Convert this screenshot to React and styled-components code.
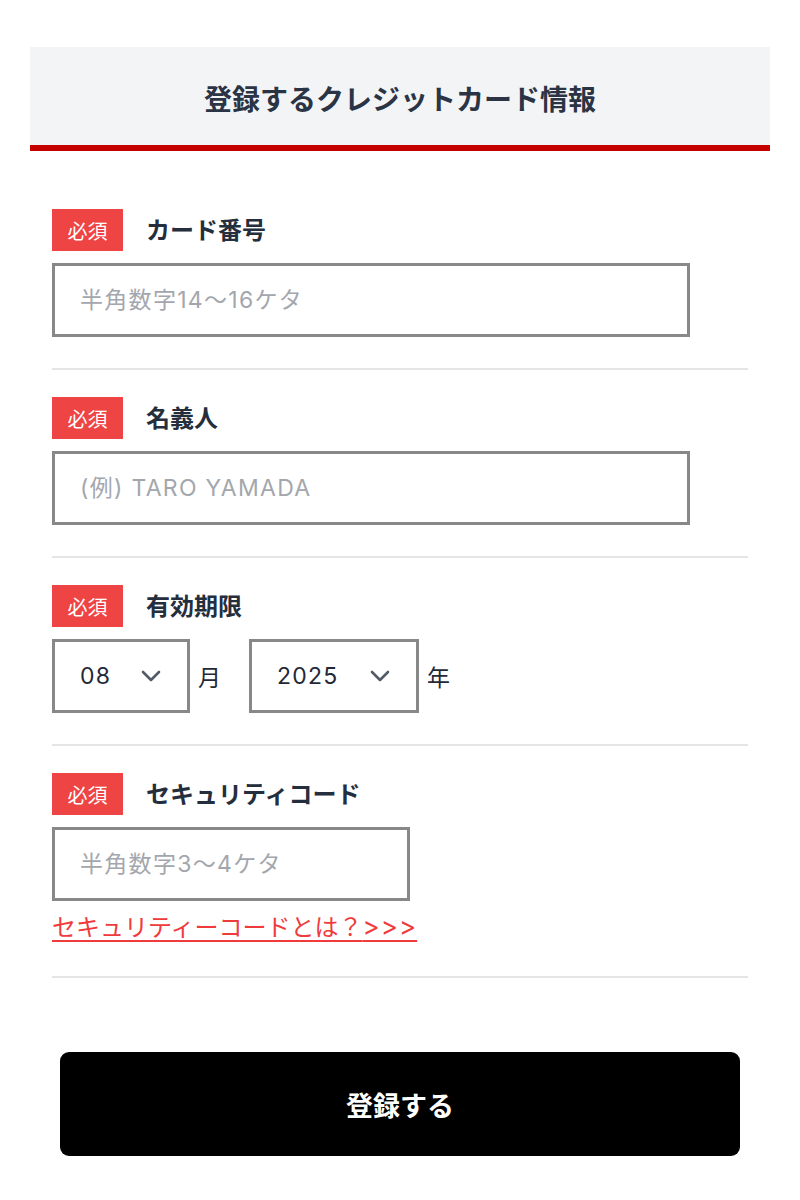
import React from "react";
import styled, { createGlobalStyle } from "styled-components";

const GlobalStyle = createGlobalStyle`
  html, body { margin: 0; padding: 0; background: #ffffff; }
  body {
    font-family: Inter, "Noto Sans CJK JP", "Noto Sans", sans-serif;
    color: #1f2937;
  }
  * { box-sizing: border-box; }
`;

const Page = styled.div`
  width: 800px;
  padding: 47px 30px 44px;
`;

const Header = styled.header`
  height: 104px;
  background: #f3f4f6;
  border-bottom: 6px solid #c40000;
  display: flex;
  align-items: center;
  justify-content: center;
  padding-top: 4px;
`;

const Title = styled.h1`
  margin: 0;
  font-size: 28px;
  font-weight: 700;
  color: #2b3444;
  letter-spacing: 0;
`;

const Form = styled.form`
  padding: 31px 22px 0;
`;

const Section = styled.section`
  padding: 27px 0 ${(p) => p.$bottom || 31}px;
  border-bottom: 2px solid #e5e5e5;
`;

const LabelRow = styled.div`
  display: flex;
  align-items: center;
  margin-bottom: 12px;
`;

const Badge = styled.span`
  width: 71px;
  height: 42px;
  background: #ef4444;
  color: #ffffff;
  font-size: 20px;
  display: flex;
  align-items: center;
  justify-content: center;
`;

const Label = styled.label`
  margin-left: 23px;
  margin-top: -3px;
  font-size: 24px;
  font-weight: 700;
  color: #252e3d;
`;

const TextInput = styled.input`
  display: block;
  width: ${(p) => p.$width}px;
  height: 74px;
  border: 3px solid #888888;
  border-radius: 0;
  padding: 0 0 0 25px;
  font-family: inherit;
  font-size: 23px;
  letter-spacing: 1.3px;
  color: #1f2937;
  outline: none;
  &::placeholder { color: #a3a7ad; }
`;

const DateRow = styled.div`
  display: flex;
  align-items: center;
`;

const SelectWrap = styled.div`
  position: relative;
  width: ${(p) => p.$width}px;
  height: 74px;
`;

const Select = styled.select`
  appearance: none;
  -webkit-appearance: none;
  width: 100%;
  height: 100%;
  border: 3px solid #888888;
  border-radius: 0;
  background: #ffffff;
  padding: 0 0 0 25px;
  font-family: inherit;
  font-size: 23px;
  letter-spacing: 1.2px;
  color: #1f2937;
  outline: none;
`;

const Chevron = styled.svg`
  position: absolute;
  right: 29px;
  top: 50%;
  transform: translateY(-50%);
  pointer-events: none;
`;

const Unit = styled.span`
  font-size: 23px;
  color: #1f2937;
  margin: 0 ${(p) => p.$after || 0}px 0 8px;
`;

const HelpLink = styled.a`
  display: inline-block;
  margin-top: 9px;
  font-size: 24px;
  line-height: 36px;
  height: 36px;
  color: #ef3b3b;
  text-decoration: underline;
  text-underline-offset: 4px;
  text-decoration-thickness: 2px;
`;

const Arrows = styled.span`
  font-size: 26px;
  line-height: 1;
  letter-spacing: 1px;
`;

const SubmitButton = styled.button`
  display: flex;
  align-items: center;
  justify-content: center;
  width: 680px;
  height: 104px;
  margin: 74px auto 0;
  background: #000000;
  color: #ffffff;
  border: none;
  border-radius: 9px;
  font-family: inherit;
  font-size: 27px;
  font-weight: 700;
`;

const ChevronIcon = () => (
  <Chevron width="20" height="12" viewBox="0 0 20 12">
    <path d="M2 2 L10 10 L18 2" fill="none" stroke="#535b67" strokeWidth="2.6" strokeLinecap="round" strokeLinejoin="round" />
  </Chevron>
);

const Field = ({ label, children, bottom }) => (
  <Section $bottom={bottom}>
    <LabelRow>
      <Badge>必須</Badge>
      <Label>{label}</Label>
    </LabelRow>
    {children}
  </Section>
);

export default function App() {
  return (
    <>
      <GlobalStyle />
      <Page>
        <Header>
          <Title>登録するクレジットカード情報</Title>
        </Header>
        <Form onSubmit={(e) => e.preventDefault()}>
          <Field label="カード番号">
            <TextInput $width={638} placeholder="半角数字14〜16ケタ" />
          </Field>
          <Field label="名義人">
            <TextInput $width={638} placeholder="(例) TARO YAMADA" />
          </Field>
          <Field label="有効期限">
            <DateRow>
              <SelectWrap $width={138}>
                <Select defaultValue="08">
                  {["01","02","03","04","05","06","07","08","09","10","11","12"].map((m) => (
                    <option key={m} value={m}>{m}</option>
                  ))}
                </Select>
                <ChevronIcon />
              </SelectWrap>
              <Unit $after={28}>月</Unit>
              <SelectWrap $width={170}>
                <Select defaultValue="2025">
                  {["2025","2026","2027","2028","2029","2030"].map((y) => (
                    <option key={y} value={y}>{y}</option>
                  ))}
                </Select>
                <ChevronIcon />
              </SelectWrap>
              <Unit>年</Unit>
            </DateRow>
          </Field>
          <Field label="セキュリティコード" bottom={30}>
            <TextInput $width={358} placeholder="半角数字3〜4ケタ" />
            <HelpLink href="#">セキュリティーコードとは？<Arrows>&gt;&gt;&gt;</Arrows></HelpLink>
          </Field>
          <SubmitButton type="submit">登録する</SubmitButton>
        </Form>
      </Page>
    </>
  );
}
